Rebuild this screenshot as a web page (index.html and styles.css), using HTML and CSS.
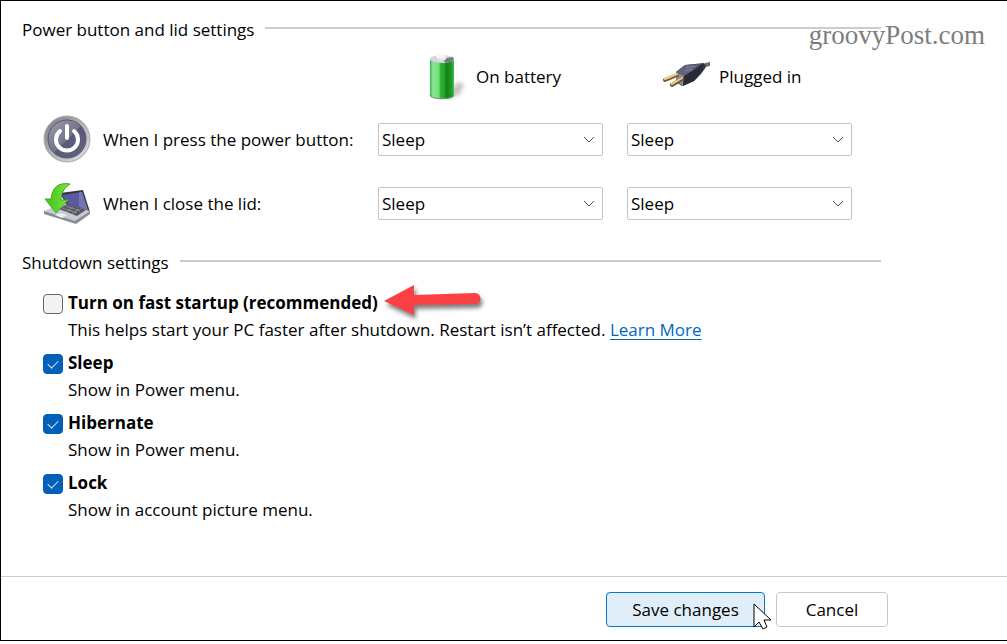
FILE: index.html
```html
<!DOCTYPE html>
<html lang="en">
<head>
    <meta charset="UTF-8">
    <meta name="viewport" content="width=device-width, initial-scale=1.0">
    <title>Power button and lid settings</title>
    <link rel="stylesheet" href="styles.css">
</head>
<body>
    <form class="window">
        <div class="watermark">groovyPost.com</div>

        <main class="content">
            <!-- Power button and lid -->
            <section>
                <h2 class="section-title">Power button and lid settings</h2>
                <div class="power-grid">
                    <div class="column-head column-battery">
                        <svg class="icon" width="48" height="48" viewBox="0 0 48 48" aria-hidden="true">
                            <defs>
                                <linearGradient id="green">
                                    <stop offset="0" stop-color="#3fae49"/>
                                    <stop offset=".12" stop-color="#8be592"/>
                                    <stop offset=".38" stop-color="#72dc79"/>
                                    <stop offset=".42" stop-color="#37b53c"/>
                                    <stop offset=".62" stop-color="#1ea326"/>
                                    <stop offset=".68" stop-color="#128018"/>
                                    <stop offset=".9" stop-color="#219a29"/>
                                    <stop offset="1" stop-color="#54bd59"/>
                                </linearGradient>
                                <filter id="soft" x="-30%" y="-30%" width="160%" height="160%"><feGaussianBlur stdDeviation="2"/></filter>
                            </defs>
                            <path d="M24 44l14-15 6 2-4 10-12 5z" fill="#999" opacity=".6" filter="url(#soft)"/>
                            <path d="M10 6v36c0 5 24 5 24 0V6z" fill="url(#green)"/>
                            <ellipse cx="22" cy="6" rx="12" ry="4" fill="#d5d5dc"/>
                            <path d="M22 6l11-2c2 3-2 5-7 6z" fill="#77778b"/>
                            <path d="M17 3v3c0 2 9 2 9 0V3z" fill="#e7e7ec"/>
                            <ellipse cx="21" cy="3" rx="5" ry="2" fill="#f7f7fa"/>
                            <path d="M10 42c0 5 24 5 24 0" fill="none" stroke="#778b78"/>
                        </svg>
                        <span>On battery</span>
                    </div>
                    <div class="column-head column-plugged">
                        <svg class="icon" width="48" height="48" viewBox="0 0 48 48" aria-hidden="true">
                            <path d="M39 14l3-4 5-1v4l-5 1-3 5z" fill="#677068"/>
                            <path d="M13 19l9-7 19-2 2 4-5 7-7 7-12 5-6-4z" fill="#353747"/>
                            <path d="M13 19l9-7 16-1-9 7-8 5z" fill="#61637b"/>
                            <path d="M13 19l8 4-1 10-7-5z" fill="#8b8da1"/>
                            <path d="M21 23l9-5 11-7-4 10-6 7-11 5z" fill="#282a38"/>
                            <path d="M2 27l12-5M9 32l10-6" stroke="#775a24" stroke-width="4" stroke-linecap="round"/>
                            <path d="M2 26l12-5M9 31l10-6" stroke="#edd18b" stroke-width="2" stroke-linecap="round"/>
                            <path d="M23 15l8-2m-9 5l7-2" stroke="#85889b"/>
                        </svg>
                        <span>Plugged in</span>
                    </div>

                    <div class="row-label">
                        <svg class="icon" width="48" height="48" viewBox="0 0 48 48" aria-hidden="true">
                            <defs>
                                <linearGradient id="ring" x2="1" y2="1">
                                    <stop offset="0" stop-color="#77777e"/>
                                    <stop offset=".5" stop-color="#b2b2b6"/>
                                    <stop offset="1" stop-color="#e2e2e2"/>
                                </linearGradient>
                                <linearGradient id="face" x2="1" y2="1">
                                    <stop offset="0" stop-color="#a0a0aa"/>
                                    <stop offset=".5" stop-color="#73738e"/>
                                    <stop offset=".52" stop-color="#595979"/>
                                    <stop offset="1" stop-color="#64647f"/>
                                </linearGradient>
                            </defs>
                            <circle cx="24" cy="24" r="23" fill="url(#ring)" stroke="#aaa"/>
                            <circle cx="24" cy="24" r="19" fill="url(#face)" stroke="#55556e"/>
                            <path d="M17 16a11 11 0 1 0 14 0M24 11v12" fill="none" stroke="#fff" stroke-width="4" stroke-linecap="round"/>
                        </svg>
                        <span id="press-label">When I press the power button:</span>
                    </div>
                    <div class="dropdown">
                        <select aria-labelledby="press-label"><option>Sleep</option><option>Hibernate</option><option>Shut down</option></select>
                        <svg class="chevron" width="12" height="8" viewBox="0 0 12 8" aria-hidden="true"><path d="M1 1l5 5 5-5"/></svg>
                    </div>
                    <div class="dropdown">
                        <select aria-labelledby="press-label"><option>Sleep</option><option>Hibernate</option><option>Shut down</option></select>
                        <svg class="chevron" width="12" height="8" viewBox="0 0 12 8" aria-hidden="true"><path d="M1 1l5 5 5-5"/></svg>
                    </div>

                    <div class="row-label">
                        <svg class="icon" width="48" height="48" viewBox="0 0 48 48" aria-hidden="true">
                            <defs>
                                <linearGradient id="arrowGreen" x2="1">
                                    <stop offset="0" stop-color="#43bd20"/>
                                    <stop offset="1" stop-color="#79e93e"/>
                                </linearGradient>
                            </defs>
                            <path d="M17 14l23-3 7 22-23-6z" fill="#34353d"/>
                            <path d="M19 16l20-3 6 18-20-6z" fill="#5b59a2"/>
                            <path d="M36 13h3l6 18-9-3z" fill="#7774b5"/>
                            <path d="M1 32l19-8 27 8-15 12z" fill="#c9cbd2"/>
                            <path d="M1 32l31 10 15-10v3L33 45 1 35z" fill="#8a8c96"/>
                            <path d="M16 30l8-5 19 6-9 6z" fill="#555963"/>
                            <path d="M19 29l15 5m-11-7l14 5m-14 1l7-5m-1 7l7-5" stroke="#8a8d96"/>
                            <path d="M12 36l5-2 7 2-5 3z" fill="#eee"/>
                            <path d="M27 5C15 3 9 9 8 20H2l11 14 12-13h-7c0-7 3-12 9-16z" fill="url(#arrowGreen)" stroke="#43a929"/>
                        </svg>
                        <span id="lid-label">When I close the lid:</span>
                    </div>
                    <div class="dropdown">
                        <select aria-labelledby="lid-label"><option>Sleep</option><option>Hibernate</option><option>Shut down</option></select>
                        <svg class="chevron" width="12" height="8" viewBox="0 0 12 8" aria-hidden="true"><path d="M1 1l5 5 5-5"/></svg>
                    </div>
                    <div class="dropdown">
                        <select aria-labelledby="lid-label"><option>Sleep</option><option>Hibernate</option><option>Shut down</option></select>
                        <svg class="chevron" width="12" height="8" viewBox="0 0 12 8" aria-hidden="true"><path d="M1 1l5 5 5-5"/></svg>
                    </div>
                </div>
            </section>

            <!-- Shutdown -->
            <section class="shutdown">
                <h2 class="section-title">Shutdown settings</h2>
                <div class="options">
                    <div class="option">
                        <input type="checkbox" id="fast">
                        <div class="option-name">
                            <label for="fast">Turn on fast startup (recommended)</label>
                            <svg class="pointer-arrow" width="104" height="40" viewBox="0 0 104 40" aria-hidden="true">
                                <path d="M4 18L34 2v10l61-2a5 5 0 0 1 0 11l-61 1v10z"/>
                            </svg>
                        </div>
                        <p>This helps start your PC faster after shutdown. Restart isn’t affected. <a href="#">Learn More</a></p>
                    </div>
                    <div class="option">
                        <input type="checkbox" id="sleep" checked>
                        <div class="option-name"><label for="sleep">Sleep</label></div>
                        <p>Show in Power menu.</p>
                    </div>
                    <div class="option">
                        <input type="checkbox" id="hibernate" checked>
                        <div class="option-name"><label for="hibernate">Hibernate</label></div>
                        <p>Show in Power menu.</p>
                    </div>
                    <div class="option">
                        <input type="checkbox" id="lock" checked>
                        <div class="option-name"><label for="lock">Lock</label></div>
                        <p>Show in account picture menu.</p>
                    </div>
                </div>
            </section>
        </main>

        <footer class="actions">
            <button type="button" class="btn btn-save">
                Save changes
                <svg class="cursor" width="20" height="28" viewBox="0 0 20 28" aria-hidden="true">
                    <path d="M1 1v23l5-5 4 7 4-2-3-7h7z"/>
                </svg>
            </button>
            <button type="button" class="btn">Cancel</button>
        </footer>
    </form>
</body>
</html>
```
FILE: styles.css
```css
* {
    box-sizing: border-box;
}

body {
    margin: 0;
    background: #fff;
    color: #000;
    font-family: "Open Sans", "Noto Sans", sans-serif;
    font-size: 17px;
    line-height: 24px;
}

h2,
p {
    margin: 0;
}

.window {
    position: relative;
    border: solid #000;
    border-width: 1px 0 1px 1px;
}

.content {
    padding: 17px 126px 53px 21px;
}

.watermark {
    position: absolute;
    top: 18px;
    right: 22px;
    color: #7d7d7d;
    font-family: "Liberation Serif", serif;
    font-size: 27px;
    line-height: 32px;
}

/* section headings with the rule on the right */
.section-title {
    display: flex;
    align-items: center;
    gap: 11px;
    font-size: 17px;
    font-weight: normal;
}

.section-title::after {
    content: "";
    flex: 1;
    height: 2px;
    margin-bottom: 4px;
    background: #ccc;
}

/* power settings */
.power-grid {
    display: grid;
    grid-template-columns: 311px 1fr 1fr;
    grid-auto-rows: 64px;
    column-gap: 24px;
    align-items: center;
    padding: 2px 29px 0 21px;
}

.column-head,
.row-label {
    display: flex;
    align-items: center;
    gap: 12px;
    white-space: nowrap;
}

.column-head {
    gap: 8px;
    padding-top: 1px;
}

.column-battery {
    grid-column: 2;
    padding-left: 42px;
}

.column-plugged {
    padding-left: 36px;
}

.icon {
    flex: none;
}

.row-label .icon {
    margin-bottom: 3px;
}

.dropdown {
    position: relative;
    margin-bottom: 2px;
}

.dropdown select {
    display: block;
    appearance: none;
    width: 100%;
    height: 33px;
    padding: 2px 30px 0 3px;
    border: 1px solid #c4c4c4;
    border-radius: 2px;
    background: #fff;
    color: #000;
    font: inherit;
}

.chevron {
    position: absolute;
    top: 13px;
    right: 8px;
    fill: none;
    stroke: #555;
    pointer-events: none;
}

/* shutdown settings */
.shutdown {
    padding-top: 15px;
}

.options {
    display: grid;
    gap: 6px;
    padding: 14px 0 0 21px;
}

.option {
    display: grid;
    grid-template-columns: 20px 1fr;
    column-gap: 5px;
    align-items: center;
}

.option-name {
    display: flex;
    align-items: center;
    height: 28px;
    font-weight: bold;
}

.option p {
    grid-column: 2;
    line-height: 26px;
}

.option a {
    color: #0067c0;
    text-underline-offset: 3px;
}

.option input {
    display: grid;
    place-items: center;
    appearance: none;
    width: 20px;
    height: 20px;
    margin: 2px 0 0;
    border: 1px solid #666;
    border-radius: 4px;
    background: #f3f3f3;
}

.option input:checked {
    border-color: #0060b8;
    background: #0060b8;
}

.option input:checked::before {
    content: "";
    width: 9px;
    height: 5px;
    margin-bottom: 3px;
    border: solid #d5e6f5;
    border-width: 0 0 1px 1px;
    transform: rotate(-45deg);
}

.pointer-arrow {
    flex: none;
    margin: -6px 0 -6px 2px;
    overflow: visible;
    fill: #fb4144;
    filter: drop-shadow(2px 4px 2px rgba(0, 0, 0, 0.5));
}

/* bottom bar */
.actions {
    display: flex;
    justify-content: flex-end;
    gap: 11px;
    padding: 15px 119px 13px;
    border-top: 1px solid #ccc;
}

.btn {
    position: relative;
    min-width: 112px;
    height: 35px;
    padding: 1px 25px 0;
    border: 1px solid #c8c8c8;
    border-radius: 4px;
    background: #fff;
    color: #000;
    font: inherit;
}

.btn-save {
    min-width: 159px;
    border-color: #0078d4;
    background: #e0eef9;
}

.cursor {
    position: absolute;
    top: 10px;
    right: -9px;
    fill: #fff;
    stroke: #000;
}
```
